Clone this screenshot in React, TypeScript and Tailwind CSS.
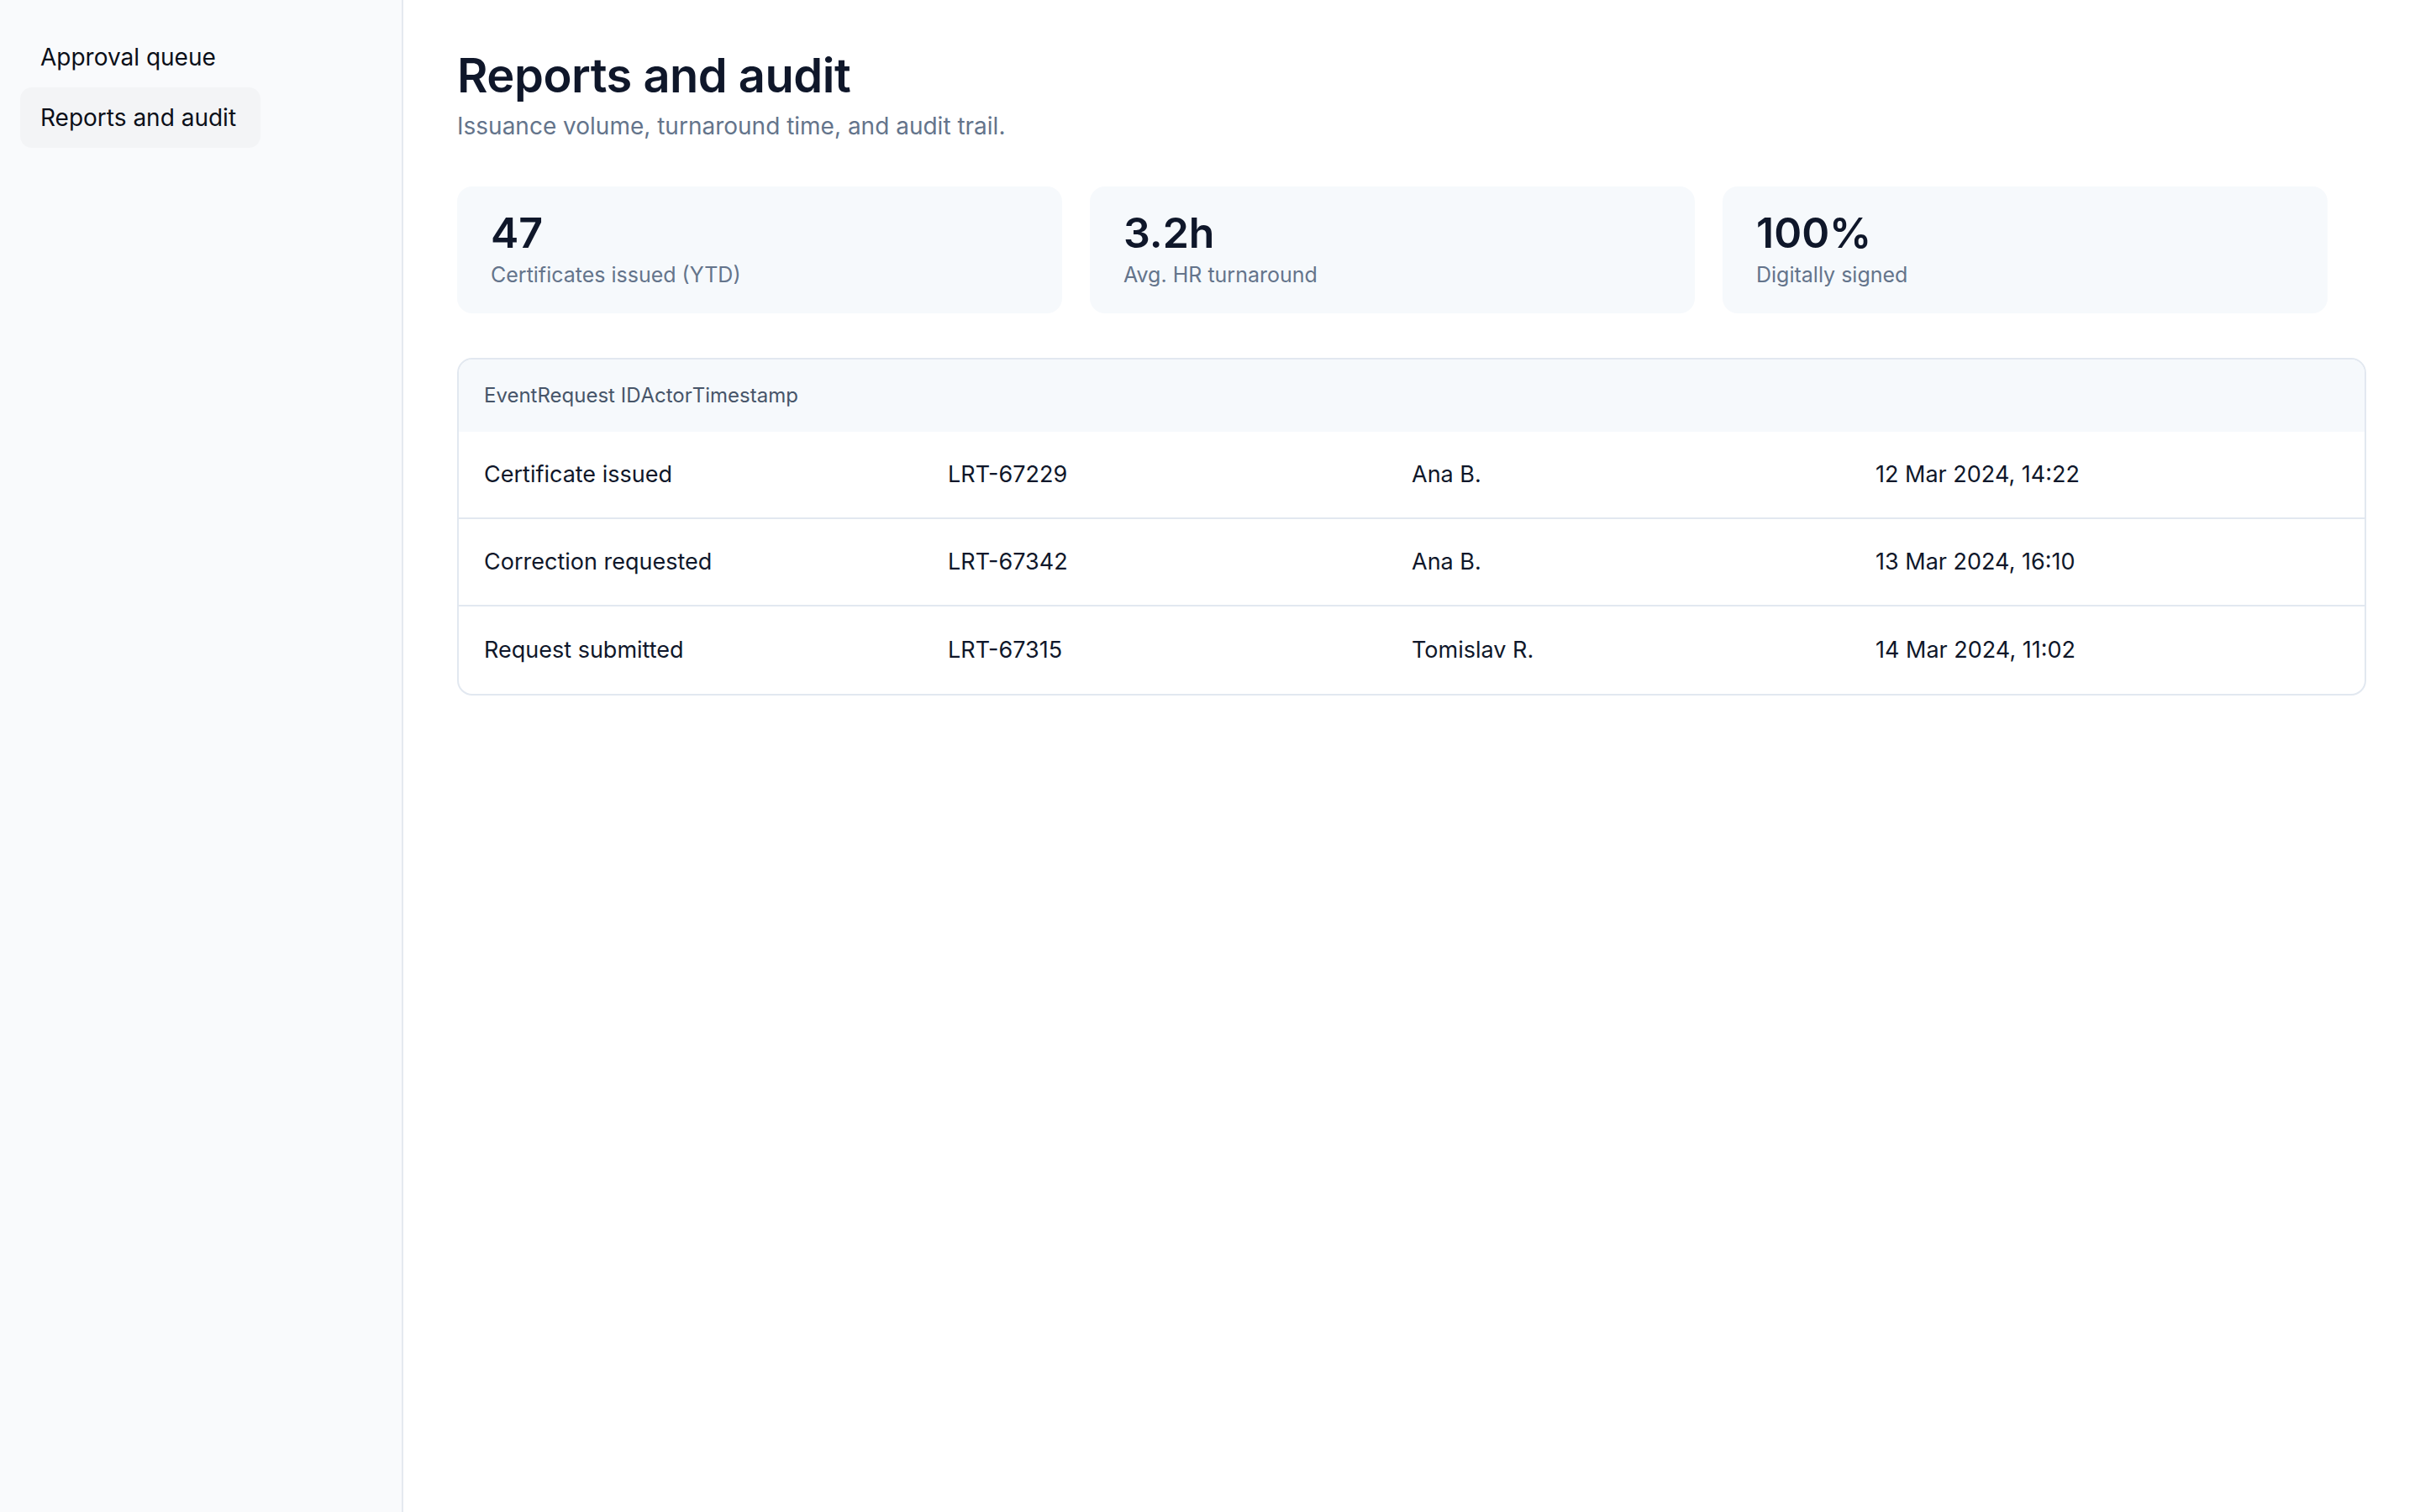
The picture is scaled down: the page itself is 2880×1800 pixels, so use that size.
export default function App() {
  const rows = [
    ["Certificate issued", "LRT-67229", "Ana B.", "12 Mar 2024, 14:22"],
    ["Correction requested", "LRT-67342", "Ana B.", "13 Mar 2024, 16:10"],
    ["Request submitted", "LRT-67315", "Tomislav R.", "14 Mar 2024, 11:02"],
  ];
  const cards = [
    ["47", "Certificates issued (YTD)"],
    ["3.2h", "Avg. HR turnaround"],
    ["100%", "Digitally signed"],
  ];
  return (
    <div className="flex min-h-[1800px] bg-white" style={{ fontFamily: "Inter, 'Noto Sans', sans-serif" }}>
      <aside className="w-[480px] shrink-0 bg-[#f9fafc] border-r-2 border-[#e5e9f0] px-[24px] pt-[40px] flex flex-col gap-[8px]">
        <div className="px-[24px] h-[56px] flex items-center text-[28px] text-[#0b0f19]">Approval queue</div>
        <div className="px-[24px] h-[72px] w-[286px] flex items-center text-[28px] text-[#0b0f19] bg-[#f3f4f6] rounded-[14px]">Reports and audit</div>
      </aside>
      <main className="flex-1 px-[64px] pt-[52px]">
        <h1 className="text-[56px] font-semibold text-[#0f172a] leading-[76px] tracking-[-0.5px]">Reports and audit</h1>
        <p className="text-[28px] text-[#64748b] leading-[40px] mt-[2px]">Issuance volume, turnaround time, and audit trail.</p>
        <div className="flex gap-[33px] mt-[52px]">
          {cards.map(([v, l]) => (
            <div key={l} className="w-[720px] h-[151px] bg-[#f6f9fc] rounded-[18px] px-[40px] pt-[26px]">
              <div className="text-[50px] font-semibold text-[#0f172a] leading-[58px]">{v}</div>
              <div className="text-[25px] text-[#64748b] leading-[34px] mt-[4px]">{l}</div>
            </div>
          ))}
        </div>
        <div className="mt-[53px] border-2 border-[#e2e8f0] rounded-[18px] overflow-hidden">
          <div className="h-[86px] bg-[#f6f9fc] px-[30px] flex items-center text-[24px] text-[#475569]">
            <span>Event</span><span>Request ID</span><span>Actor</span><span>Timestamp</span>
          </div>
          {rows.map((r, i) => (
            <div key={i} className={`h-[104px] px-[30px] grid grid-cols-4 items-center text-[27px] text-[#0f172a] ${i < 2 ? "border-b-2 border-[#e2e8f0]" : ""}`}>
              {r.map((c) => <span key={c}>{c}</span>)}
            </div>
          ))}
        </div>
      </main>
    </div>
  );
}
